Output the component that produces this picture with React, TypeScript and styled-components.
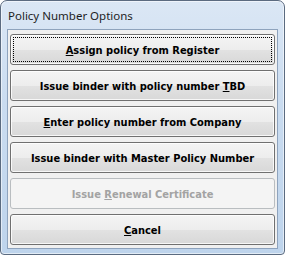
import { createGlobalStyle } from 'styled-components';
import styled from 'styled-components';

const GlobalStyle = createGlobalStyle`
  html, body {
    margin: 0;
    padding: 0;
    background: #ffffff;
  }
`;

const Window = styled.div`
  box-sizing: border-box;
  width: 285px;
  height: 255px;
  display: flex;
  flex-direction: column;
  padding: 0 6px 5px 6px;
  border: 1px solid #5b6b80;
  border-radius: 7px 7px 4px 4px;
  background: linear-gradient(180deg, #dbe7f5 0%, #cadcf0 40%, #bed4ec 100%);
  box-shadow: inset 0 0 0 1px rgba(255, 255, 255, 0.55);
`;

const TitleBar = styled.div`
  height: 28px;
  display: flex;
  align-items: center;
  padding-left: 1px;
  font-family: 'Noto Sans', 'Open Sans', sans-serif;
  font-size: 11.5px;
  color: #1e1e1e;
`;

const Client = styled.div`
  flex: 1;
  display: flex;
  flex-direction: column;
  gap: 5px;
  padding: 4px 2px 3px 2px;
  border: 1px solid #8ea3bd;
  background: #f0f0f0;
`;

const Button = styled.button<{ $focused?: boolean }>`
  position: relative;
  height: 31px;
  flex: none;
  margin: 0;
  border: 1px solid ${({ disabled }) => (disabled ? '#b9bdc0' : '#707070')};
  border-radius: 3px;
  background: ${({ disabled }) =>
    disabled
      ? '#f4f4f4'
      : 'linear-gradient(180deg, #f4f4f4 0%, #ededed 50%, #e2e2e2 51%, #d8d8d8 100%)'};
  box-shadow: ${({ disabled }) => (disabled ? 'none' : 'inset 0 0 0 1px rgba(255, 255, 255, 0.8)')};
  font-family: 'DejaVu Sans Condensed', 'DejaVu Sans', sans-serif;
  font-weight: bold;
  font-size: 11px;
  color: ${({ disabled }) => (disabled ? '#a3a3a3' : '#000000')};
  padding: 1px 0 0 0;

  &::after {
    content: '';
    display: ${({ $focused }) => ($focused ? 'block' : 'none')};
    position: absolute;
    inset: 2px;
    border: 1px dotted #000000;
  }
`;

const options = [
  { pre: '', key: 'A', post: 'ssign policy from Register', focused: true },
  { pre: 'Issue binder with policy number ', key: 'T', post: 'BD' },
  { pre: '', key: 'E', post: 'nter policy number from Company' },
  { pre: 'Issue binder with Master Policy Number', key: '', post: '' },
  { pre: 'Issue ', key: 'R', post: 'enewal Certificate', disabled: true },
  { pre: '', key: 'C', post: 'ancel' },
];

export default function App() {
  return (
    <>
      <GlobalStyle />
      <Window>
        <TitleBar>Policy Number Options</TitleBar>
        <Client>
          {options.map((o, i) => (
            <Button key={i} $focused={o.focused} disabled={o.disabled}>
              {o.pre}
              {o.key && <u>{o.key}</u>}
              {o.post}
            </Button>
          ))}
        </Client>
      </Window>
    </>
  );
}
